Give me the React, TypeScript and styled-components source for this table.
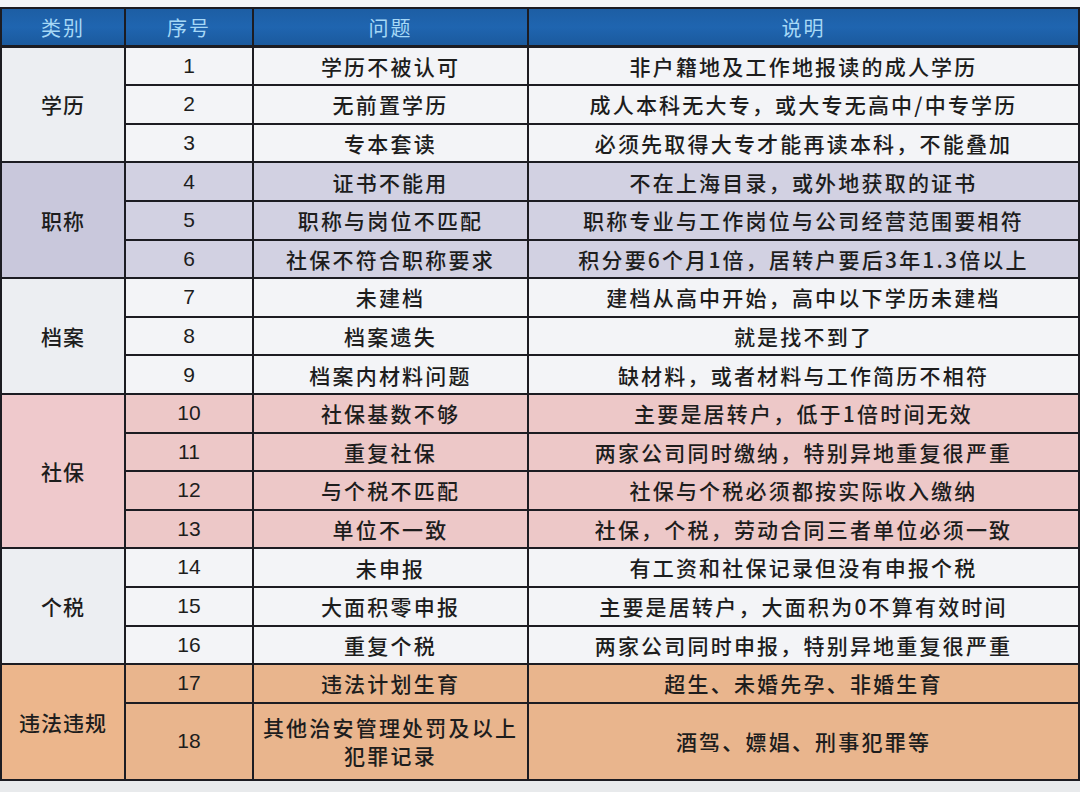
import React from 'react';
import styled, { createGlobalStyle } from 'styled-components';

type Tone = 'plain' | 'lavender' | 'pink' | 'orange';

interface Row {
  no: number;
  issue: string[];
  note: string;
  tall?: boolean;
}

interface Group {
  name: string;
  tone: Tone;
  rows: Row[];
}

const groups: Group[] = [
  {
    name: '学历',
    tone: 'plain',
    rows: [
      { no: 1, issue: ['学历不被认可'], note: '非户籍地及工作地报读的成人学历' },
      { no: 2, issue: ['无前置学历'], note: '成人本科无大专，或大专无高中/中专学历' },
      { no: 3, issue: ['专本套读'], note: '必须先取得大专才能再读本科，不能叠加' },
    ],
  },
  {
    name: '职称',
    tone: 'lavender',
    rows: [
      { no: 4, issue: ['证书不能用'], note: '不在上海目录，或外地获取的证书' },
      { no: 5, issue: ['职称与岗位不匹配'], note: '职称专业与工作岗位与公司经营范围要相符' },
      { no: 6, issue: ['社保不符合职称要求'], note: '积分要6个月1倍，居转户要后3年1.3倍以上' },
    ],
  },
  {
    name: '档案',
    tone: 'plain',
    rows: [
      { no: 7, issue: ['未建档'], note: '建档从高中开始，高中以下学历未建档' },
      { no: 8, issue: ['档案遗失'], note: '就是找不到了' },
      { no: 9, issue: ['档案内材料问题'], note: '缺材料，或者材料与工作简历不相符' },
    ],
  },
  {
    name: '社保',
    tone: 'pink',
    rows: [
      { no: 10, issue: ['社保基数不够'], note: '主要是居转户，低于1倍时间无效' },
      { no: 11, issue: ['重复社保'], note: '两家公司同时缴纳，特别异地重复很严重' },
      { no: 12, issue: ['与个税不匹配'], note: '社保与个税必须都按实际收入缴纳' },
      { no: 13, issue: ['单位不一致'], note: '社保，个税，劳动合同三者单位必须一致' },
    ],
  },
  {
    name: '个税',
    tone: 'plain',
    rows: [
      { no: 14, issue: ['未申报'], note: '有工资和社保记录但没有申报个税' },
      { no: 15, issue: ['大面积零申报'], note: '主要是居转户，大面积为0不算有效时间' },
      { no: 16, issue: ['重复个税'], note: '两家公司同时申报，特别异地重复很严重' },
    ],
  },
  {
    name: '违法违规',
    tone: 'orange',
    rows: [
      { no: 17, issue: ['违法计划生育'], note: '超生、未婚先孕、非婚生育' },
      {
        no: 18,
        issue: ['其他治安管理处罚及以上', '犯罪记录'],
        note: '酒驾、嫖娼、刑事犯罪等',
        tall: true,
      },
    ],
  },
];

const groupBg: Record<Tone, string> = {
  plain: '#eceef2',
  lavender: '#c9c8dc',
  pink: '#efc9cc',
  orange: '#ecb68c',
};

const rowBg: Record<Tone, string> = {
  plain: '#f3f4f7',
  lavender: '#d2d1e2',
  pink: '#edc8c8',
  orange: '#e9b58d',
};

const GlobalStyle = createGlobalStyle`
  html, body {
    margin: 0;
    padding: 0;
    background: #e9ebee;
  }
  body {
    font-family: 'Liberation Sans', 'Noto Sans CJK SC', sans-serif;
    color: #1d1d1d;
  }
`;

const Page = styled.div`
  width: 1080px;
  height: 792px;
  background: linear-gradient(#f4f5f7 0, #f4f5f7 8px, #e8eaec 783px);
  padding-top: 7px;
  box-sizing: border-box;
  overflow: hidden;
`;

const Table = styled.div`
  display: grid;
  grid-template-columns: 122px 126px 273px 1fr;
  grid-auto-rows: 36.6px;
  gap: 2px;
  padding: 2px;
  background: #1c1c22;
`;

const HeadCell = styled.div`
  height: 36px;
  display: flex;
  align-items: center;
  justify-content: center;
  background: linear-gradient(#1d5ea4, #1f65b0 50%, #1b5a9e);
  color: #a6d8f6;
  font-size: 20px;
  letter-spacing: 2px;
  font-family: 'Noto Sans CJK SC', sans-serif;
`;

const GroupCell = styled.div<{ $tone: Tone; $span: number }>`
  grid-column: 1;
  grid-row: span ${({ $span }) => $span};
  display: flex;
  align-items: center;
  justify-content: center;
  background: ${({ $tone }) => groupBg[$tone]};
  font-size: 21px;
  font-weight: 500;
  letter-spacing: 1px;
  font-family: 'Noto Sans CJK SC', sans-serif;
`;

const Cell = styled.div<{ $tone: Tone; $tall?: boolean }>`
  grid-row: span ${({ $tall }) => ($tall ? 2 : 1)};
  display: flex;
  flex-direction: column;
  align-items: center;
  justify-content: center;
  text-align: center;
  background: ${({ $tone }) => rowBg[$tone]};
  font-size: 21px;
  line-height: 1.25;
  letter-spacing: 2.2px;
  font-family: 'Noto Sans CJK SC', sans-serif;
  font-weight: 500;
  white-space: nowrap;
`;

const NumCell = styled(Cell)`
  grid-column: 2;
  letter-spacing: 0;
  font-size: 21px;
  font-weight: 400;
  font-family: 'Liberation Sans', sans-serif;
`;

const Line = styled.span`
  display: block;
  line-height: 28px;
`;

const headers = ['类别', '序号', '问题', '说明'];

export default function App() {
  return (
    <>
      <GlobalStyle />
      <Page>
        <Table>
          {headers.map((h) => (
            <HeadCell key={h}>{h}</HeadCell>
          ))}
          {groups.map((g) => {
            const span = g.rows.reduce((n, r) => n + (r.tall ? 2 : 1), 0);
            return (
              <React.Fragment key={g.name}>
                <GroupCell $tone={g.tone} $span={span}>
                  {g.name}
                </GroupCell>
                {g.rows.map((r) => (
                  <React.Fragment key={r.no}>
                    <NumCell $tone={g.tone} $tall={r.tall}>
                      {r.no}
                    </NumCell>
                    <Cell $tone={g.tone} $tall={r.tall}>
                      {r.issue.map((line) => (
                        <Line key={line}>{line}</Line>
                      ))}
                    </Cell>
                    <Cell $tone={g.tone} $tall={r.tall}>
                      {r.note}
                    </Cell>
                  </React.Fragment>
                ))}
              </React.Fragment>
            );
          })}
        </Table>
      </Page>
    </>
  );
}
